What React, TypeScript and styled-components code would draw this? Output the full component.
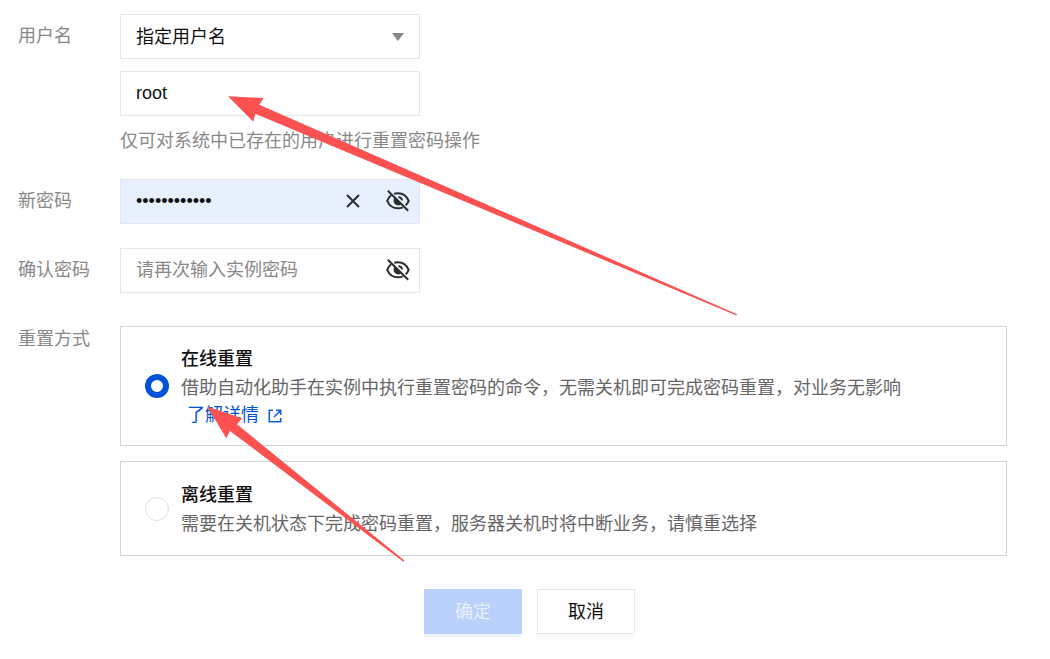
import { useState } from "react";
import styled, { createGlobalStyle, css } from "styled-components";

const GlobalStyle = createGlobalStyle`
  *, *::before, *::after { box-sizing: border-box; }
  body {
    margin: 0;
    background: #fff;
    color: #111;
    font-family: "Liberation Sans", "Noto Sans CJK SC", sans-serif;
    font-size: 18px;
    line-height: 27px;
  }
  button, input, select { font: inherit; color: inherit; margin: 0; }
`;

const Page = styled.main`
  position: relative;
  padding: 14px 43px 24px 18px;
`;

const Form = styled.form`
  display: flex;
  flex-direction: column;
  gap: 24px;
`;

const Row = styled.div`
  display: grid;
  grid-template-columns: 102px minmax(0, 1fr);
  align-items: start;
`;

const labelText = css`
  color: #888;
  line-height: 44px;
`;

const Label = styled.label`
  ${labelText}
`;

const GroupLabel = styled.span`
  ${labelText}
`;

const Stack = styled.div`
  display: flex;
  flex-direction: column;
  gap: 12px;
`;

const Field = styled.div<{ $filled?: boolean }>`
  display: flex;
  align-items: center;
  width: 300px;
  max-width: 100%;
  height: 45px;
  padding-right: 9px;
  border: 1px solid #e4e6ee;
  background: ${(p) => (p.$filled ? "#e8effd" : "#fff")};
`;

const Input = styled.input`
  flex: 1;
  min-width: 0;
  height: 100%;
  padding: 0 15px;
  border: 0;
  outline: 0;
  background: transparent;
  &::placeholder { color: #888; opacity: 1; }
`;

const SelectField = styled(Field)`
  position: relative;
  padding-right: 0;
`;

const Select = styled.select`
  width: 100%;
  height: 100%;
  padding: 2px 40px 0 15px;
  border: 0;
  outline: 0;
  appearance: none;
  background: transparent;
`;

const Caret = styled.svg`
  position: absolute;
  right: 15px;
  pointer-events: none;
`;

const IconButton = styled.button`
  display: flex;
  padding: 0 0 2px;
  border: 0;
  background: transparent;
  cursor: pointer;
`;

const FieldActions = styled.div`
  display: flex;
  align-items: center;
  gap: 26px;
`;

const Hint = styled.p`
  margin: 0;
  color: #888;
`;

const Options = styled.div`
  display: flex;
  flex-direction: column;
  gap: 15px;
  padding-top: 9px;
`;

const Option = styled.div`
  display: flex;
  align-items: center;
  gap: 12px;
  min-height: 95px;
  padding: 0 24px;
  border: 1px solid #cfd5de;
`;

const Radio = styled.input`
  flex: none;
  width: 24px;
  height: 24px;
  appearance: none;
  border: 1px solid #dcdfe8;
  border-radius: 50%;
  background: #fff;
  &:checked { border: 6px solid #0052d9; }
`;

const OptionText = styled.div`
  display: flex;
  flex-direction: column;
  gap: 2px;
  padding: 19px 0 16px;
`;

const OptionTitle = styled.label`
  font-weight: 500;
`;

const OptionDesc = styled.p`
  margin: 0;
  color: #666;
`;

const DetailLink = styled.a`
  display: inline-flex;
  align-items: center;
  gap: 9px;
  margin-left: 6px;
  color: #0052d9;
  text-decoration: none;
  vertical-align: top;
`;

const Footer = styled.div`
  display: flex;
  justify-content: center;
  gap: 15px;
  padding: 9px 0 0 34px;
`;

const Button = styled.button<{ $primary?: boolean }>`
  width: 98px;
  height: 45px;
  padding: 2px 0 0;
  border: 1px solid ${(p) => (p.$primary ? "#bad2fb" : "#e4e6ee")};
  background: ${(p) => (p.$primary ? "#bad2fb" : "#fff")};
  color: ${(p) => (p.$primary ? "#e8f0fe" : "#111")};
  box-shadow: 0 3px 0 ${(p) => (p.$primary ? "#f1f6fe" : "#fbfbfb")};
`;

const Markup = styled.svg`
  position: absolute;
  top: 0;
  left: 0;
  pointer-events: none;
`;

function EyeOff() {
  return (
    <svg width="24" height="24" viewBox="0 0 24 24" fill="none" stroke="#2b2d30" strokeWidth="2" aria-hidden="true">
      <path d="M8.200 4.800C9.400 4.400 10.700 4.200 12 4.200c5 0 8.700 3 10.700 7.600-.7 1.700-1.700 3.200-3 4.400M5.200 6.300C3.500 7.600 2.100 9.500 1.200 11.800c2 4.600 5.800 7.500 10.800 7.500 1.800 0 3.400-.4 4.800-1" />
      <path d="M9 8A4.800 4.800 0 1 0 15.800 15z" fill="#2b2d30" stroke="none" />
      <path d="M12.500 8c1.800.2 3.200 1.500 3.600 3.400" />
      <path d="M1.800 1.800L22.200 21.800" />
    </svg>
  );
}

function Close() {
  return (
    <svg width="14" height="14" viewBox="0 0 14 14" stroke="#2b2d30" strokeWidth="2" aria-hidden="true">
      <path d="M1 1l12 12M13 1L1 13" />
    </svg>
  );
}

function External() {
  return (
    <svg width="14" height="14" viewBox="0 0 14 14" fill="none" stroke="#0f5fe0" strokeWidth="1.6" aria-hidden="true">
      <path d="M5 1.200H1.300V12.700H12.700V9M8 1.200h4.700V6M12.700 1.200L6 8" />
    </svg>
  );
}

export default function App() {
  const [password, setPassword] = useState("abcdefgh1234");
  const [mode, setMode] = useState("online");

  return (
    <>
      <GlobalStyle />
      <Page>
        <Form onSubmit={(e) => e.preventDefault()}>
          <Row>
            <Label htmlFor="user-type">用户名</Label>
            <Stack>
              <SelectField>
                <Select id="user-type">
                  <option>指定用户名</option>
                </Select>
                <Caret width="12" height="8" viewBox="0 0 12 8" aria-hidden="true">
                  <path d="M0 0h12L6 8z" fill="#888" />
                </Caret>
              </SelectField>
              <Field>
                <Input aria-label="用户名" defaultValue="root" />
              </Field>
              <Hint>仅可对系统中已存在的用户进行重置密码操作</Hint>
            </Stack>
          </Row>
          <Row>
            <Label htmlFor="password">新密码</Label>
            <Field $filled>
              <Input id="password" type="password" value={password} onChange={(e) => setPassword(e.target.value)} />
              <FieldActions>
                <IconButton type="button" onClick={() => setPassword("")}>
                  <Close />
                </IconButton>
                <IconButton type="button">
                  <EyeOff />
                </IconButton>
              </FieldActions>
            </Field>
          </Row>
          <Row>
            <Label htmlFor="confirm">确认密码</Label>
            <Field>
              <Input id="confirm" type="password" placeholder="请再次输入实例密码" />
              <IconButton type="button">
                <EyeOff />
              </IconButton>
            </Field>
          </Row>
          <Row role="radiogroup" aria-labelledby="mode-label">
            <GroupLabel id="mode-label">重置方式</GroupLabel>
            <Options>
              <Option>
                <Radio id="online" type="radio" name="mode" checked={mode === "online"} onChange={() => setMode("online")} />
                <OptionText>
                  <OptionTitle htmlFor="online">在线重置</OptionTitle>
                  <OptionDesc>
                    借助自动化助手在实例中执行重置密码的命令，无需关机即可完成密码重置，对业务无影响
                    <DetailLink href="#details">
                      了解详情
                      <External />
                    </DetailLink>
                  </OptionDesc>
                </OptionText>
              </Option>
              <Option>
                <Radio id="offline" type="radio" name="mode" checked={mode === "offline"} onChange={() => setMode("offline")} />
                <OptionText>
                  <OptionTitle htmlFor="offline">离线重置</OptionTitle>
                  <OptionDesc>需要在关机状态下完成密码重置，服务器关机时将中断业务，请慎重选择</OptionDesc>
                </OptionText>
              </Option>
            </Options>
          </Row>
          <Footer>
            <Button $primary type="submit" disabled>
              确定
            </Button>
            <Button type="button">取消</Button>
          </Footer>
        </Form>
        <Markup width="740" height="564" viewBox="0 0 740 564" fill="#fb5151" aria-hidden="true">
          <path d="M228 96.300L263.700 98L259.300 104.700L737 314.300L736.500 315.500L255.300 113.700L253.300 121.700Z" />
          <path d="M207.300 406.500L242 418.300L237 424.300L404.300 560.500L403.300 561.700L230 431L226.300 438.300Z" />
        </Markup>
      </Page>
    </>
  );
}
